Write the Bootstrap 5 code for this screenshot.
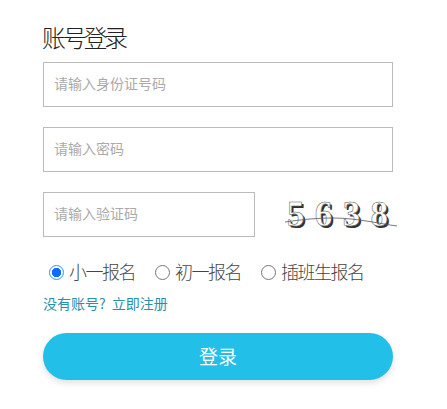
<!DOCTYPE html>
<html lang="zh-CN">
<head>
<meta charset="utf-8">
<title>账号登录</title>
<link href="https://cdn.jsdelivr.net/npm/bootstrap@5.3.0/dist/css/bootstrap.min.css" rel="stylesheet">
<style>
html,body{background:#fff;height:100%;overflow:hidden}
body{font-family:"Noto Sans CJK SC",sans-serif;font-weight:300;color:#333}
.login-wrap{width:350px;margin-left:43px;padding-top:22px}
.login-title{font-size:24px;font-weight:300;line-height:32px;margin:0 0 7px -1px;color:#222;letter-spacing:-3.3px;padding-bottom:1px;transform:translateY(-1px)}
.login-input.form-control{height:45px;border:1px solid #bbb;border-radius:0;font-size:14px;padding:0 10px 3px;color:#333;box-shadow:none}
.login-input::placeholder{color:#aaa}
.input-gap{margin-bottom:20px}
.code-input{width:212px;flex:none}
.captcha-box{width:130px;height:45px;margin-left:22px;flex:none;overflow:hidden}
.captcha-num{display:flex;width:101px;margin-left:10px;justify-content:space-between;font-family:"Liberation Serif",serif;font-weight:700;font-size:35px;line-height:45px;color:#fff;-webkit-text-stroke:.5px #555;text-shadow:2px 2px 0 #333}
.captcha-strike{display:block;width:112px;height:10px;margin:-20px 0 0 8px}
.radio-row{margin-top:23px;padding-left:6px;gap:20px;height:24px}
.radio-row .form-check{margin:0;padding:0;min-height:0;display:flex;align-items:center}
.radio-row .form-check-input{float:none;margin:0 5px 0 0;width:15px;height:15px;border:1px solid #767676;box-shadow:none;flex:none}
.radio-row .form-check-input:checked{border-color:#3b8cff;background:#fff radial-gradient(circle,#0d6efd 0 4.4px,#fff 5px)}
.radio-row .form-check-label{font-size:18px;line-height:24px;color:#444;white-space:nowrap;letter-spacing:-1.5px;transform:translateY(-1px)}
.reg-line{font-size:14px;font-weight:400;line-height:20px;margin-top:9px;color:#2a8fa8}
.reg-line a{color:#2a8fa8;text-decoration:none;margin-left:3px}
.login-btn.btn{display:block;width:100%;height:47px;margin-top:20px;border:0;border-radius:24px;background:#22bfe9;color:#fff;font-size:19px;font-weight:400;padding:0;box-shadow:0 3px 6px rgba(0,0,0,.12)}
</style>
</head>
<body>
<form class="login-wrap" onsubmit="return false">
  <h1 class="login-title">账号登录</h1>
  <input class="form-control login-input input-gap" type="text" placeholder="请输入身份证号码">
  <input class="form-control login-input input-gap" type="password" placeholder="请输入密码">
  <div class="d-flex align-items-center">
    <input class="form-control login-input code-input" type="text" placeholder="请输入验证码">
    <div class="captcha-box" role="img" aria-label="验证码 5638">
      <div class="captcha-num"><span>5</span><span>6</span><span>3</span><span>8</span></div>
      <svg class="captcha-strike" viewBox="0 0 112 10"><path d="M0 5C20 2 36 1 48 1C72 1 96 7 112 9" fill="none" stroke="#555" stroke-width=".8"/></svg>
    </div>
  </div>
  <div class="d-flex align-items-center radio-row">
    <div class="form-check"><input class="form-check-input" type="radio" name="grade" id="g1" checked><label class="form-check-label" for="g1">小一报名</label></div>
    <div class="form-check"><input class="form-check-input" type="radio" name="grade" id="g2"><label class="form-check-label" for="g2">初一报名</label></div>
    <div class="form-check"><input class="form-check-input" type="radio" name="grade" id="g3"><label class="form-check-label" for="g3">插班生报名</label></div>
  </div>
  <div class="reg-line">没有账号? <a href="#">立即注册</a></div>
  <button class="btn login-btn" type="submit">登录</button>
</form>
</body>
</html>
